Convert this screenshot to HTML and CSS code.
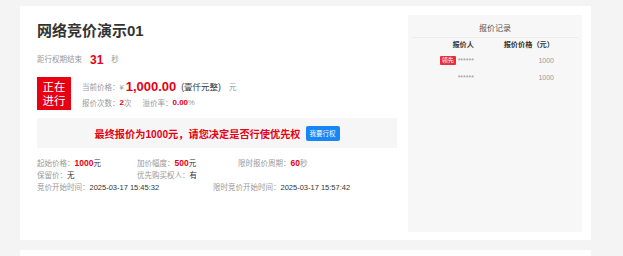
FILE: index.html
```html
<!DOCTYPE html>
<html lang="zh-CN">
<head>
  <meta charset="UTF-8" />
  <title>网络竞价演示01</title>
  <link rel="stylesheet" href="styles.css">
</head>
<body>

<div class="page">
  <div class="card">
    <div class="main">
      <h2 class="title">网络竞价演示01</h2>

      <div class="countdown">
        <span class="label">距行权期结束</span>
        <span class="sec">31</span>
        <span class="label">秒</span>
      </div>

      <div class="status">
        <div class="badge">正在<br>进行</div>
        <div class="status-info">
          <div class="line">
            <span class="label">当前价格：¥</span>
            <span class="price">1,000.00</span>
            <span class="cn">(壹仟元整)</span>
            <span class="label unit">元</span>
          </div>
          <div class="line">
            <span class="label">报价次数：</span><b class="red">2</b><span class="label">次</span>
            <span class="label gap">溢价率：</span><b class="red">0.00</b><span class="label">%</span>
          </div>
        </div>
      </div>

      <div class="banner">
        <span class="banner-text">最终报价为1000元，请您决定是否行使优先权</span>
        <button class="btn">我要行权</button>
      </div>

      <div class="rows">
        <div class="row">
          <span class="c1"><span class="label">起始价格：</span><b class="red">1000</b><span class="val">元</span></span>
          <span class="c2"><span class="label">加价幅度：</span><b class="red">500</b><span class="val">元</span></span>
          <span><span class="label">限时报价周期：</span><b class="red">60</b><span class="label">秒</span></span>
        </div>
        <div class="row">
          <span class="c1"><span class="label">保留价：</span><span class="val">无</span></span>
          <span><span class="label">优先购买权人：</span><span class="val">有</span></span>
        </div>
        <div class="row">
          <span class="c3"><span class="label">竞价开始时间：</span><span class="val">2025-03-17 15:45:32</span></span>
          <span><span class="label">限时竞价开始时间：</span><span class="val">2025-03-17 15:57:42</span></span>
        </div>
      </div>
    </div>

    <div class="records">
      <div class="records-title">报价记录</div>
      <div class="rec-head">
        <span>报价人</span>
        <span>报价价格（元）</span>
      </div>
      <div class="rec-row">
        <span><i class="tag">领先</i>******</span>
        <span>1000</span>
      </div>
      <div class="rec-row">
        <span>******</span>
        <span>1000</span>
      </div>
    </div>
  </div>

  <div class="card next"></div>
</div>

</body>
</html>
```

FILE: styles.css
```css
body {
  margin: 0;
  background: #f4f4f4;
  font-family: "Liberation Sans", "Noto Sans CJK SC", sans-serif;
  color: #333;
}
.page {
  padding: 6px 32px 0 20px;
}
.card {
  background: #fff;
  height: 234px;
  box-sizing: border-box;
  padding: 9px 9px 8px 17px;
  display: flex;
}
.card.next {
  margin-top: 10px;
  height: 6px;
  padding: 0;
}
.main {
  flex: 1;
  padding-right: 11px;
}
.title {
  margin: 6px 0 0;
  font-size: 15px;
  line-height: 20px;
  font-weight: bold;
  color: #333;
}
.label {
  font-size: 7.5px;
  color: #999;
}
.val {
  font-size: 7.5px;
  color: #333;
}
.red {
  color: #e60012;
  font-size: 8.5px;
  font-weight: bold;
}
.countdown {
  margin-top: 11px;
  line-height: 16px;
  display: flex;
  align-items: center;
}
.countdown .sec {
  color: #e60012;
  font-size: 12px;
  font-weight: bold;
  margin: 0 8px;
}
.status {
  margin-top: 9px;
  display: flex;
}
.badge {
  width: 34px;
  height: 33px;
  background: #e60012;
  color: #fff;
  font-size: 11.5px;
  line-height: 14px;
  display: flex;
  align-items: center;
  justify-content: center;
  text-align: center;
}
.status-info {
  margin-left: 11px;
  padding-top: 1px;
}
.line {
  height: 16px;
  display: flex;
  align-items: center;
}
.line .red {
  font-size: 8px;
}
.price {
  color: #e60012;
  font-size: 13px;
  font-weight: bold;
  margin-left: 2px;
}
.cn {
  font-size: 8.5px;
  color: #333;
  margin-left: 5px;
}
.unit {
  margin-left: 8px;
}
.gap {
  margin-left: 11px;
}
.banner {
  margin-top: 8px;
  height: 30px;
  background: #f6f6f6;
  display: flex;
  align-items: center;
  justify-content: center;
}
.banner-text {
  color: #e60012;
  font-size: 10.2px;
  font-weight: bold;
}
.btn {
  margin-left: 5px;
  width: 34px;
  height: 15px;
  padding: 0;
  border: none;
  border-radius: 2px;
  background: #1a86f5;
  color: #fff;
  font-family: inherit;
  font-size: 6.5px;
}
.rows {
  margin-top: 7px;
}
.row {
  display: flex;
  align-items: center;
  height: 12px;
}
.c1 {
  width: 100px;
}
.c2 {
  width: 101px;
}
.c3 {
  width: 176px;
}
.records {
  width: 174px;
  background: #f7f7f7;
  padding-top: 6px;
  box-sizing: border-box;
}
.records-title {
  text-align: center;
  font-size: 8px;
  line-height: 16px;
  color: #555;
  margin: 0 4px;
  border-bottom: 1px solid #ececec;
}
.rec-head, .rec-row {
  display: grid;
  grid-template-columns: 66px 80px;
  text-align: right;
}
.rec-head {
  line-height: 14px;
  font-size: 7.2px;
  font-weight: bold;
  color: #333;
}
.rec-row {
  line-height: 17px;
  font-size: 7px;
  color: #999;
}
.tag {
  display: inline-block;
  font-style: normal;
  background: #e8303a;
  color: #fff;
  font-size: 6px;
  line-height: 9px;
  width: 16px;
  text-align: center;
  border-radius: 1px;
  margin-right: 2px;
  vertical-align: 1px;
}
```
